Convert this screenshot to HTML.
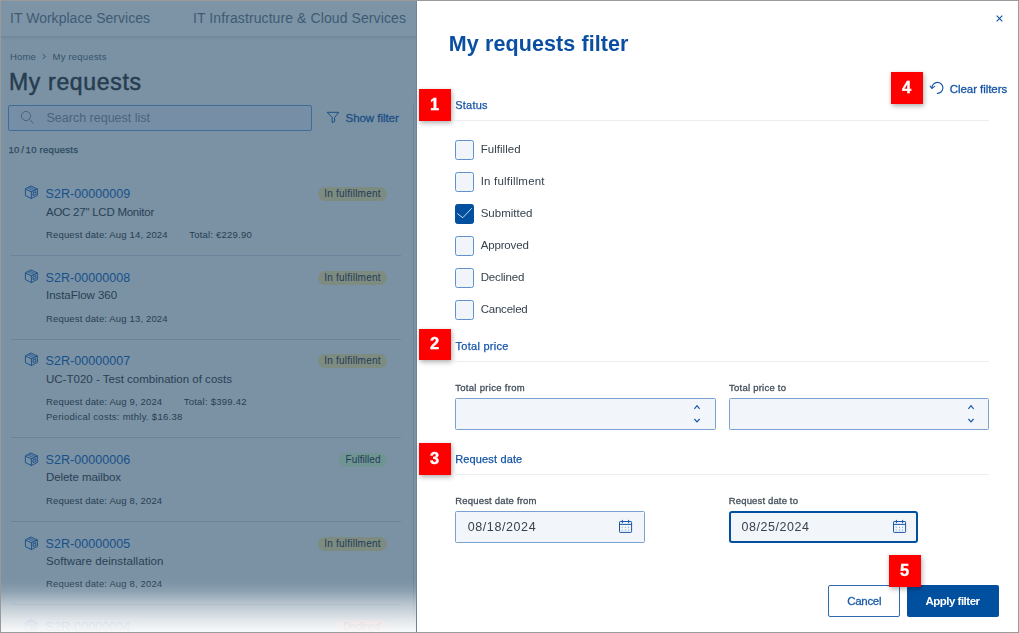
<!DOCTYPE html><html lang="en"><head><meta charset="utf-8"><title>My requests filter</title><style>
html,body{margin:0;padding:0}
body{width:1019px;height:633px;position:relative;overflow:hidden;background:#fff;font-family:"Liberation Sans", sans-serif;}
.t{position:absolute;white-space:pre;font-family:"Liberation Sans", sans-serif}
.abs,#left div,#modal div,svg{position:absolute}
#left{position:absolute;left:0;top:0;width:417px;height:633px;background:#7a92a4;overflow:hidden}
#modal{position:absolute;left:417px;top:0;width:602px;height:633px;background:#fff;}
#m{position:absolute;left:-417px;top:0;width:1019px;height:633px;will-change:transform}
.red{background:#fe0000;width:32px;height:32px;box-shadow:1px 2px 5px rgba(0,0,0,.32);color:#fff;-webkit-text-stroke:.35px #fff;font-weight:700;font-size:16.5px;line-height:30px;text-align:center;text-indent:-1px}
.cb{width:17px;height:18px;border:1px solid #5f92cb;border-radius:2.5px;background:#f1f5fa}
.inp{border:1px solid #79a1d1;border-radius:1.5px;background:#f2f5fa;box-sizing:border-box}
.hr{height:1px;background:#ebedf0}
</style></head><body>
<div id="left">
<div style="left:0;top:0;width:417px;height:36px;background:#7c94a6;box-shadow:0 1px 3px rgba(40,60,80,.18)"></div>
<div style="left:8px;top:105px;width:304px;height:25.5px;box-sizing:border-box;border:1px solid #3f6c99;border-radius:2px;background:#778fa6"></div>
<svg style="left:20px;top:110px" width="15" height="15" viewBox="0 0 15 15"><circle cx="6" cy="6" r="4.6" fill="none" stroke="#49657d" stroke-width="1"/><path d="M9.4 9.4 L13.6 13.6" stroke="#49657d" stroke-width="1" fill="none"/></svg>
<svg style="left:326px;top:110px" width="14" height="14" viewBox="0 0 14 14"><path d="M1.2 2.3 H12.8 L8.6 7.4 V11.5 L6.1 12.6 V7.4 Z" fill="none" stroke="#1b4f85" stroke-width="1" stroke-linejoin="round"/></svg>
<svg style="left:41px;top:52px" width="6" height="8" viewBox="0 0 6 8"><path d="M1.6 2.2 L4.6 4.5 L1.6 6.8" fill="none" stroke="#35516b" stroke-width="0.9"/></svg>
<div style="left:318px;top:187.0px;width:69px;height:14px;border-radius:7px;background:#7d8b80"></div>
<div style="left:318px;top:271.0px;width:69px;height:14px;border-radius:7px;background:#7d8b80"></div>
<div style="left:11px;top:254.8px;width:390px;height:1px;background:#69849a"></div>
<div style="left:318px;top:354.0px;width:69px;height:14px;border-radius:7px;background:#7d8b80"></div>
<div style="left:11px;top:338.8px;width:390px;height:1px;background:#69849a"></div>
<div style="left:339px;top:453.0px;width:48px;height:14px;border-radius:7px;background:#6f9492"></div>
<div style="left:11px;top:436.8px;width:390px;height:1px;background:#69849a"></div>
<div style="left:318px;top:537.0px;width:69px;height:14px;border-radius:7px;background:#7d8b80"></div>
<div style="left:11px;top:520.8px;width:390px;height:1px;background:#69849a"></div>
<div style="left:336px;top:620.0px;width:51px;height:14px;border-radius:7px;background:#a98a97"></div>
<div style="left:11px;top:603.9px;width:390px;height:1px;background:#69849a"></div>
<svg style="left:24px;top:185.35px" width="15" height="15" viewBox="0 0 15 15"><g fill="none" stroke="#194e87" stroke-width=".9" stroke-linejoin="round" stroke-linecap="round"><path d="M7.4 1.1 L13.4 4 V10.4 L7.4 13.5 L1.4 10.6 V4.2 Z"/><path d="M1.4 4.2 L7.4 6.8 L13.4 4 M7.4 6.8 V13.5"/><path d="M3.6 2.9 L9.7 5.8 M5.6 2 L11.6 4.8" stroke-width=".7"/><path d="M9.4 7.6 L11.8 6.7 V9.5 L9.4 10.4 Z" stroke-width=".9"/></g></svg>
<svg style="left:24px;top:269.35px" width="15" height="15" viewBox="0 0 15 15"><g fill="none" stroke="#194e87" stroke-width=".9" stroke-linejoin="round" stroke-linecap="round"><path d="M7.4 1.1 L13.4 4 V10.4 L7.4 13.5 L1.4 10.6 V4.2 Z"/><path d="M1.4 4.2 L7.4 6.8 L13.4 4 M7.4 6.8 V13.5"/><path d="M3.6 2.9 L9.7 5.8 M5.6 2 L11.6 4.8" stroke-width=".7"/><path d="M9.4 7.6 L11.8 6.7 V9.5 L9.4 10.4 Z" stroke-width=".9"/></g></svg>
<svg style="left:24px;top:352.45px" width="15" height="15" viewBox="0 0 15 15"><g fill="none" stroke="#194e87" stroke-width=".9" stroke-linejoin="round" stroke-linecap="round"><path d="M7.4 1.1 L13.4 4 V10.4 L7.4 13.5 L1.4 10.6 V4.2 Z"/><path d="M1.4 4.2 L7.4 6.8 L13.4 4 M7.4 6.8 V13.5"/><path d="M3.6 2.9 L9.7 5.8 M5.6 2 L11.6 4.8" stroke-width=".7"/><path d="M9.4 7.6 L11.8 6.7 V9.5 L9.4 10.4 Z" stroke-width=".9"/></g></svg>
<svg style="left:24px;top:451.55px" width="15" height="15" viewBox="0 0 15 15"><g fill="none" stroke="#194e87" stroke-width=".9" stroke-linejoin="round" stroke-linecap="round"><path d="M7.4 1.1 L13.4 4 V10.4 L7.4 13.5 L1.4 10.6 V4.2 Z"/><path d="M1.4 4.2 L7.4 6.8 L13.4 4 M7.4 6.8 V13.5"/><path d="M3.6 2.9 L9.7 5.8 M5.6 2 L11.6 4.8" stroke-width=".7"/><path d="M9.4 7.6 L11.8 6.7 V9.5 L9.4 10.4 Z" stroke-width=".9"/></g></svg>
<svg style="left:24px;top:535.55px" width="15" height="15" viewBox="0 0 15 15"><g fill="none" stroke="#194e87" stroke-width=".9" stroke-linejoin="round" stroke-linecap="round"><path d="M7.4 1.1 L13.4 4 V10.4 L7.4 13.5 L1.4 10.6 V4.2 Z"/><path d="M1.4 4.2 L7.4 6.8 L13.4 4 M7.4 6.8 V13.5"/><path d="M3.6 2.9 L9.7 5.8 M5.6 2 L11.6 4.8" stroke-width=".7"/><path d="M9.4 7.6 L11.8 6.7 V9.5 L9.4 10.4 Z" stroke-width=".9"/></g></svg>
<svg style="left:24px;top:618.55px" width="15" height="15" viewBox="0 0 15 15"><g fill="none" stroke="#194e87" stroke-width=".9" stroke-linejoin="round" stroke-linecap="round"><path d="M7.4 1.1 L13.4 4 V10.4 L7.4 13.5 L1.4 10.6 V4.2 Z"/><path d="M1.4 4.2 L7.4 6.8 L13.4 4 M7.4 6.8 V13.5"/><path d="M3.6 2.9 L9.7 5.8 M5.6 2 L11.6 4.8" stroke-width=".7"/><path d="M9.4 7.6 L11.8 6.7 V9.5 L9.4 10.4 Z" stroke-width=".9"/></g></svg>
<div style="left:413px;top:105px;width:1px;height:528px;background:#6a849a"></div>
<span class="t" style="left:10.0px;top:11px;font-size:14px;line-height:14px;font-weight:400;color:#3f5b74;letter-spacing:0.022px;">IT Workplace Services</span>
<span class="t" style="left:193.0px;top:11px;font-size:14px;line-height:14px;font-weight:400;color:#3f5b74;letter-spacing:0.093px;">IT Infrastructure &amp; Cloud Services</span>
<span class="t" style="left:10.0px;top:52px;font-size:9.5px;line-height:9.5px;font-weight:400;color:#35516b;letter-spacing:0.164px;">Home</span>
<span class="t" style="left:52.5px;top:52px;font-size:9.5px;line-height:9.5px;font-weight:400;color:#35516b;letter-spacing:0.223px;">My requests</span>
<span class="t" style="left:9.0px;top:71px;font-size:23px;line-height:23px;font-weight:400;color:#273d50;letter-spacing:0.667px;-webkit-text-stroke:0.5px #273d50;">My requests</span>
<span class="t" style="left:46.5px;top:112px;font-size:12.5px;line-height:12.5px;font-weight:400;color:#49647c;letter-spacing:-0.002px;">Search request list</span>
<span class="t" style="left:345.5px;top:113px;font-size:11.5px;line-height:11.5px;font-weight:400;color:#1e4f84;letter-spacing:-0.044px;-webkit-text-stroke:0.3px #1e4f84;">Show filter</span>
<span class="t" style="left:8.5px;top:145px;font-size:9.5px;line-height:9.5px;font-weight:400;color:#2d4a61;letter-spacing:0.278px;-webkit-text-stroke:0.25px #2d4a61;">10<span style="word-spacing:-1.4px"> / </span>10 requests</span>
<span class="t" style="left:45.5px;top:188px;font-size:12.5px;line-height:12.5px;font-weight:400;color:#18508a;letter-spacing:0.058px;">S2R-00000009</span>
<span class="t" style="left:46.0px;top:207px;font-size:11.5px;line-height:11.5px;font-weight:400;color:#293f53;letter-spacing:-0.249px;">AOC 27" LCD Monitor</span>
<span class="t" style="left:46.0px;top:230px;font-size:9.5px;line-height:9.5px;font-weight:400;color:#283e52;letter-spacing:0.150px;">Request date: Aug 14, 2024</span>
<span class="t" style="left:189.2px;top:230px;font-size:9.5px;line-height:9.5px;font-weight:400;color:#283e52;letter-spacing:0.222px;">Total: €229.90</span>
<span class="t" style="left:324.3px;top:189px;font-size:10px;line-height:10px;font-weight:400;color:#233d58;letter-spacing:0.217px;">In fulfillment</span>
<span class="t" style="left:45.5px;top:272px;font-size:12.5px;line-height:12.5px;font-weight:400;color:#18508a;letter-spacing:0.058px;">S2R-00000008</span>
<span class="t" style="left:46.0px;top:290px;font-size:11.5px;line-height:11.5px;font-weight:400;color:#293f53;letter-spacing:-0.047px;">InstaFlow 360</span>
<span class="t" style="left:46.0px;top:314px;font-size:9.5px;line-height:9.5px;font-weight:400;color:#283e52;letter-spacing:0.150px;">Request date: Aug 13, 2024</span>
<span class="t" style="left:324.3px;top:273px;font-size:10px;line-height:10px;font-weight:400;color:#233d58;letter-spacing:0.217px;">In fulfillment</span>
<span class="t" style="left:45.5px;top:355px;font-size:12.5px;line-height:12.5px;font-weight:400;color:#18508a;letter-spacing:0.058px;">S2R-00000007</span>
<span class="t" style="left:46.0px;top:374px;font-size:11.5px;line-height:11.5px;font-weight:400;color:#293f53;letter-spacing:0.006px;">UC-T020 - Test combination of costs</span>
<span class="t" style="left:46.0px;top:397px;font-size:9.5px;line-height:9.5px;font-weight:400;color:#283e52;letter-spacing:0.151px;">Request date: Aug 9, 2024</span>
<span class="t" style="left:183.7px;top:397px;font-size:9.5px;line-height:9.5px;font-weight:400;color:#283e52;letter-spacing:0.237px;">Total: $399.42</span>
<span class="t" style="left:46.0px;top:412px;font-size:9.5px;line-height:9.5px;font-weight:400;color:#283e52;letter-spacing:0.270px;">Periodical costs: mthly. $16.38</span>
<span class="t" style="left:324.3px;top:356px;font-size:10px;line-height:10px;font-weight:400;color:#233d58;letter-spacing:0.217px;">In fulfillment</span>
<span class="t" style="left:45.5px;top:454px;font-size:12.5px;line-height:12.5px;font-weight:400;color:#18508a;letter-spacing:0.058px;">S2R-00000006</span>
<span class="t" style="left:46.0px;top:472px;font-size:11.5px;line-height:11.5px;font-weight:400;color:#293f53;letter-spacing:-0.077px;">Delete mailbox</span>
<span class="t" style="left:46.0px;top:496px;font-size:9.5px;line-height:9.5px;font-weight:400;color:#283e52;letter-spacing:0.151px;">Request date: Aug 8, 2024</span>
<span class="t" style="left:345.6px;top:455px;font-size:10px;line-height:10px;font-weight:400;color:#233d58;letter-spacing:0.059px;">Fulfilled</span>
<span class="t" style="left:45.5px;top:538px;font-size:12.5px;line-height:12.5px;font-weight:400;color:#18508a;letter-spacing:0.058px;">S2R-00000005</span>
<span class="t" style="left:46.0px;top:556px;font-size:11.5px;line-height:11.5px;font-weight:400;color:#293f53;letter-spacing:0.077px;">Software deinstallation</span>
<span class="t" style="left:46.0px;top:579px;font-size:9.5px;line-height:9.5px;font-weight:400;color:#283e52;letter-spacing:0.151px;">Request date: Aug 8, 2024</span>
<span class="t" style="left:324.3px;top:539px;font-size:10px;line-height:10px;font-weight:400;color:#233d58;letter-spacing:0.217px;">In fulfillment</span>
<span class="t" style="left:45.5px;top:621px;font-size:12.5px;line-height:12.5px;font-weight:400;color:#18508a;letter-spacing:0.058px;">S2R-00000004</span>
<span class="t" style="left:343.0px;top:622px;font-size:10px;line-height:10px;font-weight:400;color:#4a4f63;letter-spacing:-0.240px;">Declined</span>
<div style="left:0;top:578px;width:417px;height:55px;background:linear-gradient(to bottom,rgba(255,255,255,0) 0%,rgba(255,255,255,.03) 10%,rgba(255,255,255,.15) 25%,rgba(255,255,255,.48) 48%,rgba(255,255,255,.76) 75%,rgba(255,255,255,.89) 90%,rgba(255,255,255,.95) 100%)"></div>
<div style="left:416px;top:0;width:1px;height:633px;background:#6b8499"></div>
</div>
<div id="modal"><div id="m">
<svg style="left:995px;top:14px" width="9" height="9" viewBox="0 0 9 9"><path d="M1.7 1.7 L7.3 7.3 M7.3 1.7 L1.7 7.3" stroke="#1857a8" stroke-width="1.2" fill="none"/></svg>
<svg style="left:929px;top:80px" width="16" height="16" viewBox="0 0 16 16"><g fill="none" stroke="#1857a8" stroke-width="1.15" stroke-linecap="round" stroke-linejoin="round"><path d="M2.9 8 A5.5 5.5 0 1 1 8.4 13.4"/><path d="M1.2 6.1 L2.9 8.4 L5.7 6.4"/></g></svg>
<div class="hr" style="left:455px;top:120px;width:534px"></div>
<div class="hr" style="left:455px;top:361px;width:534px"></div>
<div class="hr" style="left:455px;top:474px;width:534px"></div>
<div class="cb" style="left:455px;top:140px"></div>
<div class="cb" style="left:455px;top:172px"></div>
<div class="cb" style="left:455px;top:204px;background:#00509f;border-color:#00509f"></div>
<svg style="left:455px;top:204px" width="20" height="20" viewBox="0 0 20 20"><path d="M2.3 9.6 L7.8 13.7 L16.7 4.3" fill="none" stroke="#fff" stroke-opacity=".8" stroke-width="1"/></svg>
<div class="cb" style="left:455px;top:236px"></div>
<div class="cb" style="left:455px;top:268px"></div>
<div class="cb" style="left:455px;top:300px"></div>
<div class="inp" style="left:455px;top:398px;width:261px;height:31.5px"></div>
<div class="inp" style="left:729px;top:398px;width:260px;height:31.5px"></div>
<svg style="left:692.5px;top:404px" width="8" height="20" viewBox="0 0 8 20"><path d="M1.4 4.8 L4 1.7 L6.6 4.8 M1.4 15 L4 17.8 L6.6 15" fill="none" stroke="#1857a8" stroke-width="1.15"/></svg>
<svg style="left:966.5px;top:404px" width="8" height="20" viewBox="0 0 8 20"><path d="M1.4 4.8 L4 1.7 L6.6 4.8 M1.4 15 L4 17.8 L6.6 15" fill="none" stroke="#1857a8" stroke-width="1.15"/></svg>
<div class="inp" style="left:455px;top:511px;width:189.5px;height:31.5px"></div>
<div class="inp" style="left:728.8px;top:511px;width:189.2px;height:31.8px;border:2px solid #00509f;border-radius:3px"></div>
<svg style="left:618.6px;top:519px" width="14" height="15" viewBox="0 0 14 15"><g fill="none" stroke="#1857a8" stroke-width="1"><rect x="0.5" y="2.5" width="12.1" height="10.9" rx="0.7"/><path d="M0.5 5.4 H12.6 M3.4 0.9 V4.2 M9.6 0.9 V4.2"/></g><g fill="#1857a8" opacity=".55"><rect x="2.7" y="7.8" width="1" height="1"/><rect x="6" y="7.8" width="1" height="1"/><rect x="9" y="7.8" width="1" height="1"/><rect x="2.7" y="10.5" width="1" height="1"/><rect x="6" y="10.5" width="1" height="1"/><rect x="9" y="10.5" width="1" height="1"/></g></svg>
<svg style="left:893.0px;top:519px" width="14" height="15" viewBox="0 0 14 15"><g fill="none" stroke="#1857a8" stroke-width="1"><rect x="0.5" y="2.5" width="12.1" height="10.9" rx="0.7"/><path d="M0.5 5.4 H12.6 M3.4 0.9 V4.2 M9.6 0.9 V4.2"/></g><g fill="#1857a8" opacity=".55"><rect x="2.7" y="7.8" width="1" height="1"/><rect x="6" y="7.8" width="1" height="1"/><rect x="9" y="7.8" width="1" height="1"/><rect x="2.7" y="10.5" width="1" height="1"/><rect x="6" y="10.5" width="1" height="1"/><rect x="9" y="10.5" width="1" height="1"/></g></svg>
<div style="left:828px;top:585px;width:72px;height:32px;box-sizing:border-box;border:1px solid #2f6ab0;border-radius:2px;background:#fff"></div>
<div style="left:907px;top:585px;width:92.3px;height:32px;border-radius:2px;background:#00509f"></div>
<span class="t" style="left:448.8px;top:34px;font-size:21.5px;line-height:21.5px;font-weight:700;color:#0b4fa2;letter-spacing:0.098px;">My requests filter</span>
<span class="t" style="left:455.2px;top:100px;font-size:11px;line-height:11px;font-weight:400;color:#1655a6;letter-spacing:0.235px;-webkit-text-stroke:0.25px #1655a6;">Status</span>
<span class="t" style="left:455.6px;top:341px;font-size:11px;line-height:11px;font-weight:400;color:#1655a6;letter-spacing:0.260px;-webkit-text-stroke:0.25px #1655a6;">Total price</span>
<span class="t" style="left:455.2px;top:454px;font-size:11px;line-height:11px;font-weight:400;color:#1655a6;letter-spacing:0.147px;-webkit-text-stroke:0.25px #1655a6;">Request date</span>
<span class="t" style="left:949.7px;top:84px;font-size:11.5px;line-height:11.5px;font-weight:400;color:#1655a6;letter-spacing:-0.050px;-webkit-text-stroke:0.3px #1655a6;">Clear filters</span>
<span class="t" style="left:480.7px;top:144px;font-size:11.5px;line-height:11.5px;font-weight:400;color:#36424d;letter-spacing:0.040px;">Fulfilled</span>
<span class="t" style="left:480.7px;top:176px;font-size:11.5px;line-height:11.5px;font-weight:400;color:#36424d;letter-spacing:0.189px;">In fulfillment</span>
<span class="t" style="left:480.7px;top:208px;font-size:11.5px;line-height:11.5px;font-weight:400;color:#36424d;letter-spacing:0.002px;">Submitted</span>
<span class="t" style="left:480.7px;top:240px;font-size:11.5px;line-height:11.5px;font-weight:400;color:#36424d;letter-spacing:-0.154px;">Approved</span>
<span class="t" style="left:480.7px;top:272px;font-size:11.5px;line-height:11.5px;font-weight:400;color:#36424d;letter-spacing:-0.156px;">Declined</span>
<span class="t" style="left:480.7px;top:304px;font-size:11.5px;line-height:11.5px;font-weight:400;color:#36424d;letter-spacing:-0.224px;">Canceled</span>
<span class="t" style="left:455.2px;top:383px;font-size:9.5px;line-height:9.5px;font-weight:400;color:#434f5b;letter-spacing:0.304px;-webkit-text-stroke:0.3px #434f5b;">Total price from</span>
<span class="t" style="left:729.0px;top:383px;font-size:9.5px;line-height:9.5px;font-weight:400;color:#434f5b;letter-spacing:0.238px;-webkit-text-stroke:0.3px #434f5b;">Total price to</span>
<span class="t" style="left:455.2px;top:496px;font-size:9.5px;line-height:9.5px;font-weight:400;color:#434f5b;letter-spacing:0.197px;-webkit-text-stroke:0.3px #434f5b;">Request date from</span>
<span class="t" style="left:728.8px;top:496px;font-size:9.5px;line-height:9.5px;font-weight:400;color:#434f5b;letter-spacing:0.148px;-webkit-text-stroke:0.3px #434f5b;">Request date to</span>
<span class="t" style="left:467.7px;top:521px;font-size:12.5px;line-height:12.5px;font-weight:400;color:#36424d;letter-spacing:0.594px;">08/18/2024</span>
<span class="t" style="left:741.6px;top:521px;font-size:12.5px;line-height:12.5px;font-weight:400;color:#36424d;letter-spacing:0.524px;">08/25/2024</span>
<span class="t" style="left:847.2px;top:596px;font-size:11.5px;line-height:11.5px;font-weight:400;color:#1c5cab;letter-spacing:-0.302px;-webkit-text-stroke:0.3px #1c5cab;">Cancel</span>
<span class="t" style="left:925.5px;top:596px;font-size:11.5px;line-height:11.5px;font-weight:700;color:#ffffff;letter-spacing:-0.505px;">Apply filter</span>
<div class="red" style="left:419px;top:89px;">1</div>
<div class="red" style="left:419px;top:329px;height:31px;line-height:28px;">2</div>
<div class="red" style="left:419px;top:443px;">3</div>
<div class="red" style="left:891px;top:72px;">4</div>
<div class="red" style="left:889px;top:555px;">5</div>
</div></div>
<div class="abs" style="left:0;top:0;width:1017px;height:631px;border:1px solid #9a9a9a;pointer-events:none"></div>
</body></html>
